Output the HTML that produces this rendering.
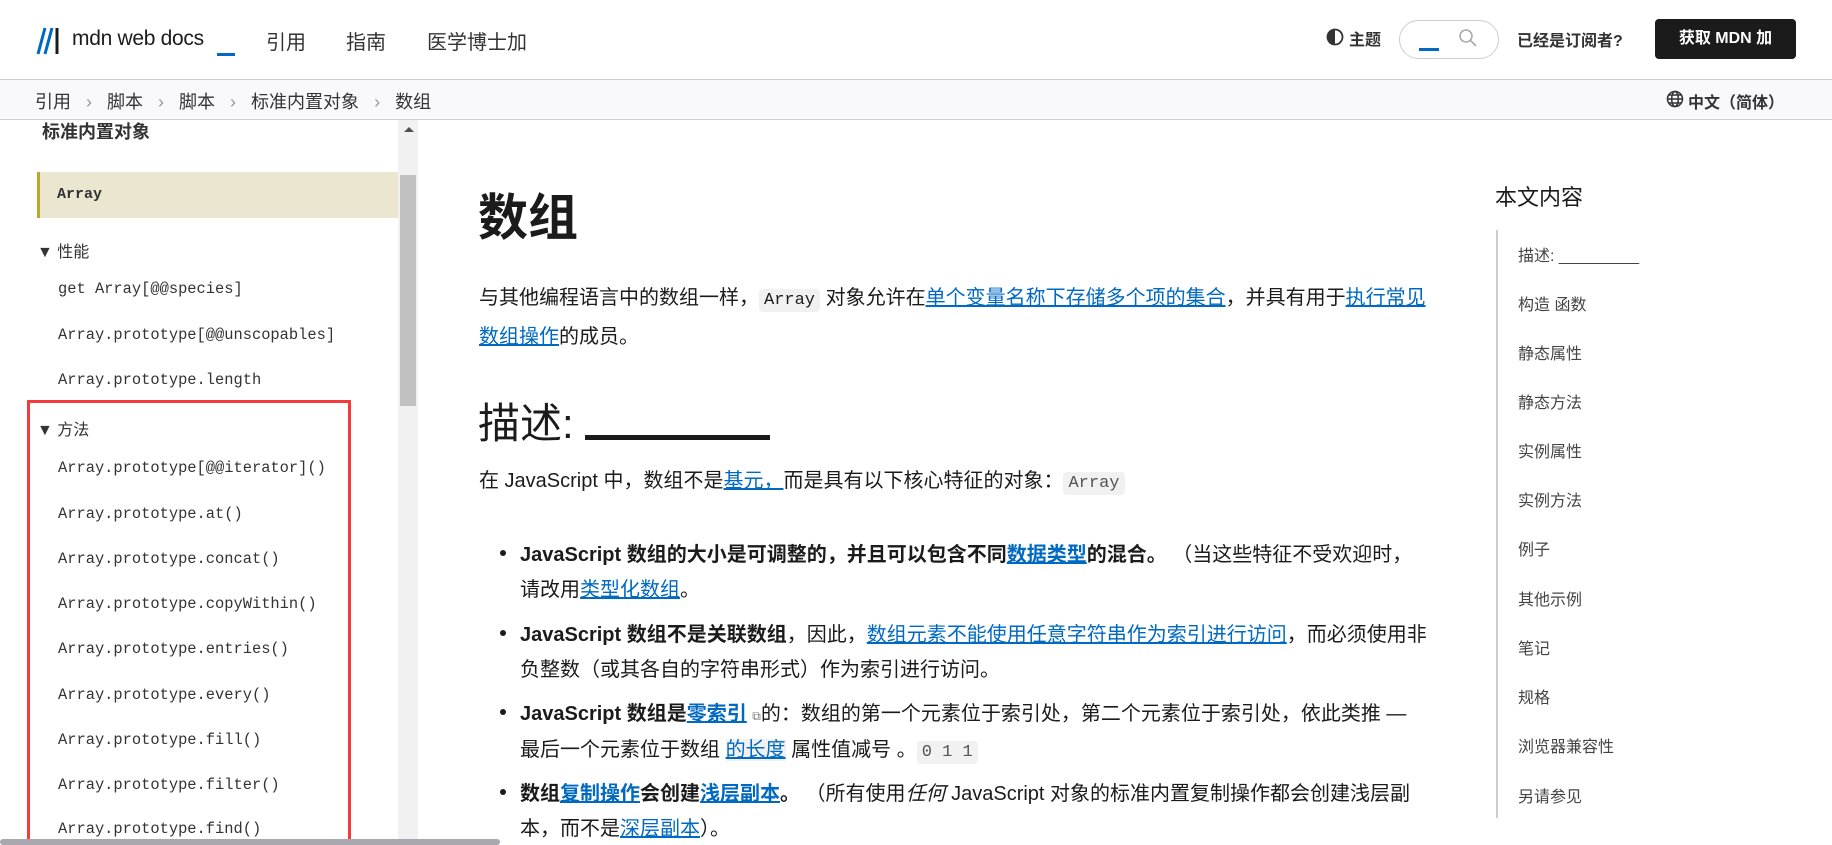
<!DOCTYPE html>
<html><head><meta charset="utf-8"><style>
*{margin:0;padding:0;box-sizing:border-box}
body{width:1832px;height:845px;overflow:hidden;background:#fff;font-family:"Liberation Sans","Noto Sans CJK SC",sans-serif;color:#1b1b1b;position:relative}
.abs{position:absolute;white-space:nowrap}
.mono{font-family:"Liberation Mono","DejaVu Sans Mono",monospace}
a{color:#0069c2;text-decoration:underline}
.side{font-size:15.4px;color:#333;left:58px}
.toc{left:1518px;font-size:16px;color:#444}
code{font-family:"Liberation Mono",monospace;background:#f2f1f1;padding:2px 5px;border-radius:4px;font-size:17px}
.li{left:520px;font-size:20px;color:#1b1b1b}
.dot{left:500px;width:6px;height:6px;border-radius:50%;background:#1b1b1b}
</style></head><body>
<!-- header -->
<div class="abs" style="left:0;top:79px;width:1832px;height:41px;background:#f9f9fb;border-top:1px solid #cdcdcd;border-bottom:1px solid #cdcdcd"></div>
<svg class="abs" style="left:36px;top:27px" width="24" height="28" viewBox="0 0 24 28"><path d="M2 27L9 1M9 27L16 1" stroke="#0069c2" stroke-width="3"/><path d="M21 1V27" stroke="#1b1b1b" stroke-width="3"/></svg>
<div class="abs" style="left:72px;top:27px;font-size:21px;color:#1b1b1b;letter-spacing:-0.3px">mdn web docs</div>
<div class="abs" style="left:217px;top:53px;width:18px;height:3px;background:#0069c2"></div>
<div class="abs" style="left:266px;top:26px;font-size:20px;color:#333">引用</div>
<div class="abs" style="left:346px;top:26px;font-size:20px;color:#333">指南</div>
<div class="abs" style="left:427px;top:26px;font-size:20px;color:#333">医学博士加</div>
<svg class="abs" style="left:1326px;top:28px" width="18" height="18" viewBox="0 0 18 18"><circle cx="9" cy="9" r="7.5" fill="none" stroke="#333" stroke-width="1.8"/><path d="M9 1.5A7.5 7.5 0 0 0 9 16.5Z" fill="#333"/></svg>
<div class="abs" style="left:1349px;top:26px;font-size:16px;font-weight:bold;color:#333">主题</div>
<div class="abs" style="left:1399px;top:20px;width:100px;height:39px;border:1px solid #cdcdcd;border-radius:20px"></div>
<div class="abs" style="left:1419px;top:48px;width:20px;height:3px;background:#0069c2"></div>
<svg class="abs" style="left:1458px;top:28px" width="20" height="20" viewBox="0 0 20 20"><circle cx="8" cy="8" r="6" fill="none" stroke="#aaa" stroke-width="1.6"/><path d="M12.5 12.5L18 18" stroke="#aaa" stroke-width="1.6"/></svg>
<div class="abs" style="left:1517px;top:27px;font-size:16px;font-weight:bold;color:#333">已经是订阅者?</div>
<div class="abs" style="left:1655px;top:19px;width:141px;height:40px;background:#1b1b1b;border-radius:4px;color:#fff;font-size:16px;font-weight:bold;text-align:center;line-height:40px">获取 MDN 加</div>
<!-- breadcrumbs -->
<div class="abs" style="left:35px;top:88px;font-size:18px;color:#333">引用 <span style="color:#999;margin:0 10px">›</span> 脚本 <span style="color:#999;margin:0 10px">›</span> 脚本 <span style="color:#999;margin:0 10px">›</span> 标准内置对象 <span style="color:#999;margin:0 10px">›</span> 数组</div>
<svg class="abs" style="left:1666px;top:90px" width="18" height="18" viewBox="0 0 18 18" fill="none" stroke="#333" stroke-width="1.5"><circle cx="9" cy="9" r="7.5"/><ellipse cx="9" cy="9" rx="3.3" ry="7.5"/><path d="M1.5 9H16.5M3 5H15M3 13H15"/></svg>
<div class="abs" style="left:1688px;top:89px;font-size:16px;font-weight:bold;color:#333">中文（简体）</div>
<!-- sidebar -->
<div class="abs" style="left:42px;top:118px;font-size:18px;font-weight:bold;color:#333">标准内置对象</div>
<div class="abs" style="left:398px;top:120px;width:20px;height:725px;background:#f1f1f1"></div>
<div class="abs" style="left:404px;top:127px;width:0;height:0;border-left:5px solid transparent;border-right:5px solid transparent;border-bottom:5px solid #505050"></div>
<div class="abs" style="left:400px;top:175px;width:16px;height:231px;background:#c1c1c1"></div>
<div class="abs" style="left:37px;top:172px;width:361px;height:46px;background:#ebe6cf;border-left:3px solid #b8a92c"></div>
<div class="abs mono" style="left:57px;top:186px;font-size:15px;font-weight:bold;color:#333">Array</div>
<div class="abs" style="left:37px;top:238px;font-size:16px;color:#333">▼ 性能</div>
<div class="abs side mono" style="top:280px">get Array[@@species]</div>
<div class="abs side mono" style="top:326px">Array.prototype[@@unscopables]</div>
<div class="abs side mono" style="top:371px">Array.prototype.length</div>
<div class="abs" style="left:37px;top:416px;font-size:16px;color:#333">▼ 方法</div>
<div class="abs side mono" style="top:459px">Array.prototype[@@iterator]()</div>
<div class="abs side mono" style="top:505px">Array.prototype.at()</div>
<div class="abs side mono" style="top:550px">Array.prototype.concat()</div>
<div class="abs side mono" style="top:595px">Array.prototype.copyWithin()</div>
<div class="abs side mono" style="top:640px">Array.prototype.entries()</div>
<div class="abs side mono" style="top:686px">Array.prototype.every()</div>
<div class="abs side mono" style="top:731px">Array.prototype.fill()</div>
<div class="abs side mono" style="top:776px">Array.prototype.filter()</div>
<div class="abs side mono" style="top:820px">Array.prototype.find()</div>
<div class="abs" style="left:27px;top:400px;width:324px;height:442px;border:3px solid #f33b3b"></div>
<div class="abs" style="left:0;top:839px;width:500px;height:6px;background:#a8a8ae;border-radius:3px"></div>
<!-- main -->
<div class="abs" style="left:478px;top:178px;font-size:50px;font-weight:bold;color:#1b1b1b">数组</div>
<div class="abs" style="left:479px;top:280px;font-size:20px;line-height:36px">与其他编程语言中的数组一样，<code>Array</code> 对象允许在<a>单个变量名称下存储多个项的集合</a>，并具有用于<a>执行常见</a><br><a>数组操作</a>的成员。</div>
<div class="abs" style="left:478px;top:390px;font-size:42px;color:#1b1b1b">描述: <span style="display:inline-block;width:185px;height:5px;background:#1b1b1b;vertical-align:-2px"></span></div>
<div class="abs" style="left:479px;top:464px;font-size:20px">在 JavaScript 中，数组不是<a>基元，</a>而是具有以下核心特征的对象：<code style="color:#555">Array</code></div>
<div class="abs dot" style="top:550px"></div>
<div class="abs li" style="top:538px"><b>JavaScript 数组的大小是可调整的，并且可以包含不同<a>数据类型</a>的混合。</b> （当这些特征不受欢迎时，</div>
<div class="abs li" style="top:573px">请改用<a>类型化数组</a>。</div>
<div class="abs dot" style="top:630px"></div>
<div class="abs li" style="top:618px"><b>JavaScript 数组不是关联数组</b>，因此，<a>数组元素不能使用任意字符串作为索引进行访问</a>，而必须使用非</div>
<div class="abs li" style="top:653px">负整数（或其各自的字符串形式）作为索引进行访问。</div>
<div class="abs dot" style="top:709px"></div>
<div class="abs li" style="top:697px"><b>JavaScript 数组是<a>零索引</a></b> <span style="font-size:12px;color:#777">⧉</span>的：数组的第一个元素位于索引处，第二个元素位于索引处，依此类推 —</div>
<div class="abs li" style="top:733px">最后一个元素位于数组 <a style="background:#f2f1f1">的长度</a> 属性值减号 。<code style="color:#555">0 1 1</code></div>
<div class="abs dot" style="top:789px"></div>
<div class="abs li" style="top:777px"><b>数组<a>复制操作</a>会创建<a>浅层副本</a>。</b> （所有使用<i>任何</i> JavaScript 对象的标准内置复制操作都会创建浅层副</div>
<div class="abs li" style="top:812px">本，而不是<a>深层副本</a>）。</div>
<!-- toc -->
<div class="abs" style="left:1495px;top:180px;font-size:22px;color:#1b1b1b">本文内容</div>
<div class="abs" style="left:1496px;top:230px;width:2px;height:588px;background:#cdcdcd"></div>
<div class="abs toc" style="top:242px">描述: _________</div>
<div class="abs toc" style="top:291px">构造 函数</div>
<div class="abs toc" style="top:340px">静态属性</div>
<div class="abs toc" style="top:389px">静态方法</div>
<div class="abs toc" style="top:438px">实例属性</div>
<div class="abs toc" style="top:487px">实例方法</div>
<div class="abs toc" style="top:536px">例子</div>
<div class="abs toc" style="top:586px">其他示例</div>
<div class="abs toc" style="top:635px">笔记</div>
<div class="abs toc" style="top:684px">规格</div>
<div class="abs toc" style="top:733px">浏览器兼容性</div>
<div class="abs toc" style="top:783px">另请参见</div>
</body></html>
